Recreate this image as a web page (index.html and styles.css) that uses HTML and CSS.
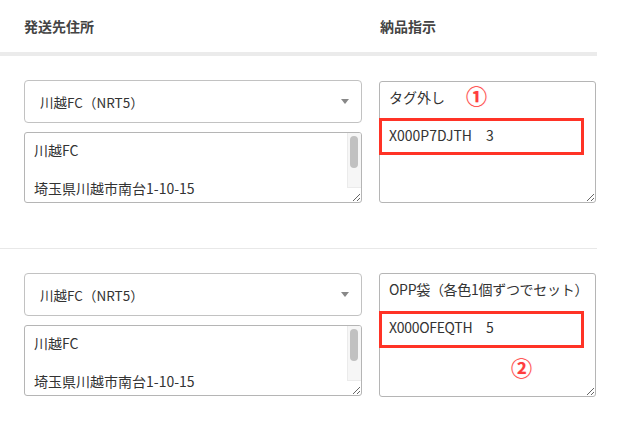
FILE: index.html
```html
<!DOCTYPE html>
<html lang="ja">
<head>
<meta charset="utf-8">
<title>納品指示</title>
<link rel="stylesheet" href="styles.css">
</head>
<body>
<div class="table">
  <div class="head">
    <div class="th">発送先住所</div>
    <div class="th">納品指示</div>
  </div>
  <div class="row">
    <div class="addr">
      <div class="select">
        <span>川越FC（NRT5）</span>
        <span class="arrow"></span>
      </div>
      <div class="addr-wrap">
        <textarea class="box addr-text">川越FC

埼玉県川越市南台1-10-15</textarea>
        <div class="sbar"><div class="thumb"></div></div>
      </div>
    </div>
    <div class="note">
      <textarea class="box note-text">タグ外し

X000P7DJTH　3</textarea>
      <div class="mark"></div>
      <span class="num num-1">①</span>
    </div>
  </div>
  <div class="row">
    <div class="addr">
      <div class="select">
        <span>川越FC（NRT5）</span>
        <span class="arrow"></span>
      </div>
      <div class="addr-wrap">
        <textarea class="box addr-text">川越FC

埼玉県川越市南台1-10-15</textarea>
        <div class="sbar"><div class="thumb"></div></div>
      </div>
    </div>
    <div class="note">
      <textarea class="box note-text note-tall">OPP袋（各色1個ずつでセット）

X000OFEQTH　5</textarea>
      <div class="mark"></div>
      <span class="num num-2">②</span>
    </div>
  </div>
</div>
</body>
</html>
```
FILE: styles.css
```css
* { box-sizing: border-box; }
html, body { margin: 0; padding: 0; background: #fff; }
body {
  font-family: "Noto Sans CJK JP", "Noto Sans", sans-serif;
  color: #333;
  width: 617px;
}
.table { width: 597px; }
.head {
  display: grid;
  grid-template-columns: 338px 217px;
  column-gap: 17px;
  padding: 16px 0 15px 24px;
  border-bottom: 4px solid #ebebeb;
}
.th {
  font-size: 14px;
  font-weight: bold;
  color: #444;
  line-height: 21px;
}
.th + .th { padding-left: 1px; }
.row {
  display: grid;
  grid-template-columns: 338px 217px;
  column-gap: 17px;
  padding: 24px 0 45px 24px;
  border-bottom: 1px solid #e8e8e8;
}
.addr { display: flex; flex-direction: column; gap: 9px; }
.select {
  height: 43px;
  border: 1px solid #c2c2c2;
  border-radius: 4px;
  display: flex;
  align-items: center;
  justify-content: space-between;
  padding: 0 12px 0 15px;
  font-size: 13.5px;
  color: #333;
}
.arrow {
  width: 0; height: 0;
  border-left: 4px solid transparent;
  border-right: 4px solid transparent;
  border-top: 5px solid #888;
}
.box {
  display: block;
  width: 100%;
  margin: 0;
  font-family: inherit;
  font-size: 14px;
  line-height: 19px;
  color: #333;
  border: 1px solid #b5b5b5;
  border-radius: 3px;
  padding: 8px 9px;
  background: #fff;
  overflow: hidden;
  resize: both;
  outline: none;
}
.addr-wrap { position: relative; }
.addr-text { height: 71px; padding-right: 24px; }
.sbar {
  position: absolute;
  top: 1px;
  right: 1px;
  bottom: 15px;
  width: 14px;
  background: #f6f6f6;
  border-left: 1px solid #ebebeb;
  border-bottom: 1px solid #ebebeb;
  border-top-right-radius: 2px;
}
.thumb {
  margin: 3px 0 0 2px;
  width: 8px;
  height: 32px;
  border-radius: 4px;
  background: #c1c1c1;
}
.note { position: relative; }
.note-text { height: 122px; padding: 6px 2px 6px 9px; margin-top: 1px; }
.note-tall { height: 124px; margin-top: 0; letter-spacing: -0.3px; }
.mark {
  position: absolute;
  left: 0;
  top: 38px;
  width: 205px;
  height: 37px;
  border: 3px solid #ff3326;
}
.num {
  position: absolute;
  font-size: 21px;
  line-height: 22px;
  font-weight: bold;
  color: #ff3d3d;
  text-shadow: 0 0 1px #ffb3b3;
}
.num-1 { left: 87px; top: 4px; }
.num-2 { left: 132px; top: 83px; }
```
